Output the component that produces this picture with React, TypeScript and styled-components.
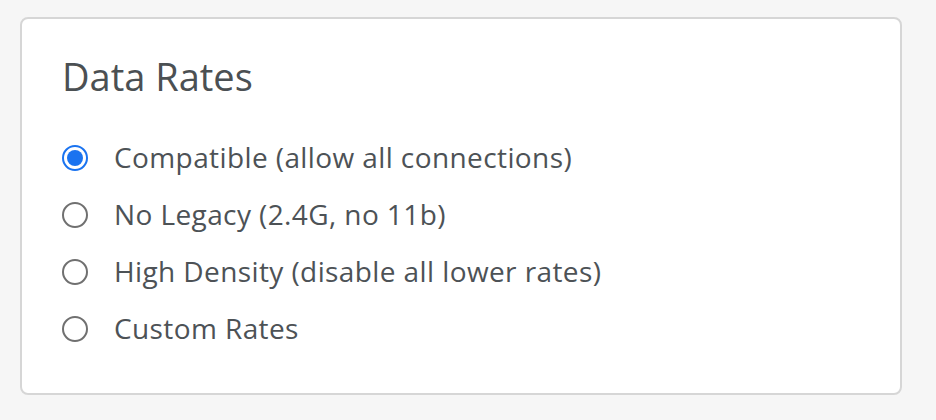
import React, { useState } from "react";
import styled, { createGlobalStyle } from "styled-components";

const Global = createGlobalStyle`
  html, body {
    margin: 0;
    padding: 0;
    background: #f6f6f6;
    font-family: "Open Sans", "Noto Sans", sans-serif;
  }
`;

const Page = styled.div`
  padding: 17px 34px 26px 20px;
`;

const Card = styled.section`
  background: #ffffff;
  border: 2px solid #d6d6d6;
  border-radius: 8px;
  padding: 34px 40px 36px 40px;
`;

const Title = styled.h2`
  margin: 0 0 30px 0;
  font-size: 38px;
  line-height: 46px;
  font-weight: 400;
  color: #4b5053;
`;

const List = styled.div`
  display: flex;
  flex-direction: column;
`;

const Row = styled.label`
  display: flex;
  align-items: center;
  gap: 26px;
  height: 57px;
  cursor: pointer;
`;

const Radio = styled.span<{ $checked: boolean }>`
  box-sizing: border-box;
  width: 26px;
  height: 26px;
  border-radius: 50%;
  border: 2px solid ${(p) => (p.$checked ? "#1a73f0" : "#707070")};
  display: flex;
  align-items: center;
  justify-content: center;
  flex: none;
  &::after {
    content: "";
    width: 16px;
    height: 16px;
    border-radius: 50%;
    background: ${(p) => (p.$checked ? "#1a73f0" : "transparent")};
  }
`;

const Label = styled.span`
  font-size: 28px;
  line-height: 57px;
  letter-spacing: 0.4px;
  color: #4d5256;
`;

const options = [
  "Compatible (allow all connections)",
  "No Legacy (2.4G, no 11b)",
  "High Density (disable all lower rates)",
  "Custom Rates",
];

export default function App() {
  const [sel, setSel] = useState(0);
  return (
    <>
      <Global />
      <Page>
        <Card>
          <Title>Data Rates</Title>
          <List>
            {options.map((o, i) => (
              <Row key={o} onClick={() => setSel(i)}>
                <Radio $checked={sel === i} />
                <Label>{o}</Label>
              </Row>
            ))}
          </List>
        </Card>
      </Page>
    </>
  );
}
